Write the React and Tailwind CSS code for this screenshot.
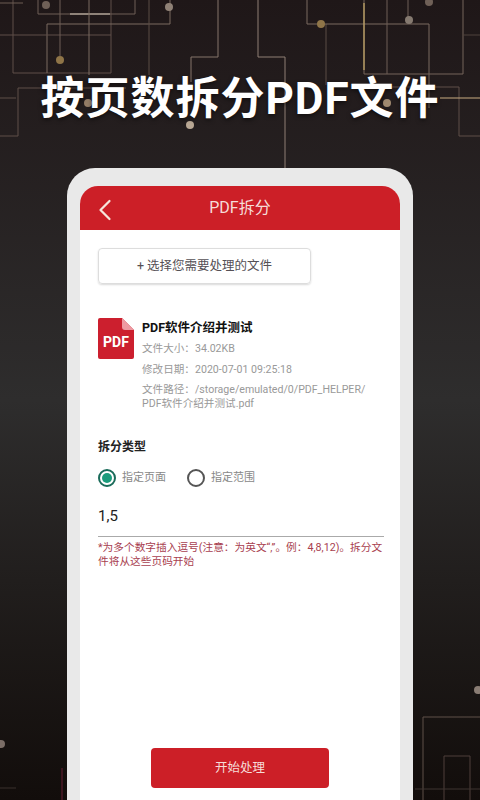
import React from 'react';
import { ChevronLeft } from 'lucide-react';

const FONT = 'font-["Roboto","Noto_Sans_CJK_SC",sans-serif]';

// circuit lines behind the phone: [path, colour, width]
const LINES = [
    ['M13 0V73H111V0', '#5f4f48', 1],
    ['M0 3H23', '#6d5c52', 1],
    ['M38 0V14H135V0', '#6f5f56', 1],
    ['M70 14H110', '#d8ccbb', 1.2],
    ['M47 73V24H170V0', '#7a6a60', 1],
    ['M0 35H111', '#5f4f48', 1],
    ['M89 0V75', '#7a6a60', 1],
    ['M60 0V56', '#6f5f56', 1],
    ['M149 0V75', '#5a4c45', 1],
    ['M218 0V57H191V82', '#85756a', 1],
    ['M258 0V57H285V168', '#8f7f74', 1],
    ['M326 24V85', '#5a4c45', 1],
    ['M307 0V24H429V108', '#7a6a60', 1],
    ['M364 0V74H463V0', '#75655b', 1],
    ['M387 0V74', '#6f5f56', 1],
    ['M364 3V70', '#c9ac68', 1.2],
    ['M408 0V20', '#6f5f56', 1],
    ['M463 35H480', '#4f423c', 1],
    ['M0 136H18V88H126', '#5f4f48', 1],
    ['M480 136H459V87H354', '#5f4f48', 1],
    ['M0 98H16', '#5f4f48', 1],
    ['M440 98H480', '#c9ab82', 1.2],
    // lower right
    ['M423 800V717H480', '#5f5049', 1],
    ['M444 800V756H470V800', '#4f3f3a', 1],
    ['M415 789H480', '#3f3531', 1],
    // lower left
    ['M0 788H16', '#3a302c', 1],
    ['M62 768V800', '#3d1620', 2],
];

const DOTS = [
    [46, 5, '#6f6057'], [169, 7, '#8f8176'], [60, 60, '#8f7548'], [88, 103, '#947d66'],
    [190, 125, '#b8a794'], [321, 24, '#8f7548'], [409, 20, '#857a70'], [387, 103, '#a08a70'],
    [429, 2, '#6f6057'], [478, 690, '#8a7d74'], [1, 744, '#7a6d66'],
];

const Background = () => (
    <svg className="absolute inset-0" width="480" height="800" viewBox="0 0 480 800" fill="none">
        {LINES.map(([d, color, width], i) => (
            <path key={i} d={d} stroke={color} strokeWidth={width} />
        ))}
        {DOTS.map(([cx, cy, color], i) => (
            <circle key={i} cx={cx} cy={cy} r="4" fill={color} />
        ))}
    </svg>
);

const PdfIcon = () => (
    <div className="relative w-9 h-[41px] shrink-0">
        <svg width="36" height="41" viewBox="0 0 36 41" className="absolute inset-0">
            <path d="M2 0H24L36 12V39a2 2 0 0 1-2 2H2a2 2 0 0 1-2-2V2a2 2 0 0 1 2-2Z" fill="#cc1f2e" />
            <path d="M24 0L36 12H27a3 3 0 0 1-3-3Z" fill="#ee9aa2" />
        </svg>
        <span className="absolute left-0 right-0 top-[15px] text-center text-[14px] leading-[18px] font-bold text-white">PDF</span>
    </div>
);

const Radio = ({ checked, label }) => (
    <div className="flex items-center gap-[6px]">
        <span className={`w-[18px] h-[18px] rounded-full border-2 flex items-center justify-center ${checked ? 'border-[#1a6b5a]' : 'border-[#555555]'}`}>
            {checked && <span className="w-[10px] h-[10px] rounded-full bg-[#1b9c7c]" />}
        </span>
        <span className="text-[11px] leading-4 text-[#888888]">{label}</span>
    </div>
);

export default function App() {
    return (
        <div className={`relative w-[480px] h-[800px] overflow-hidden bg-gradient-to-b from-[#1f1718] via-[#2e2d2d] via-50% to-[#120d0b] ${FONT}`}>
            <Background />

            <div className="relative flex flex-col items-center h-full">
                <h1 className="mt-[66px] h-[66px] text-[44px] leading-[66px] font-bold text-white tracking-[1px] whitespace-nowrap [text-shadow:0_2px_4px_rgba(0,0,0,0.5)]">
                    按页数拆分PDF文件
                </h1>

                {/* phone frame */}
                <div className="mt-[36px] w-[346px] flex-1 bg-[#e9e9e9] rounded-t-[28px] pt-[18px] px-[13px]">
                    <div className="flex flex-col h-full bg-white rounded-t-[18px] overflow-hidden">
                        <div className="relative flex items-center justify-center h-[44px] shrink-0 bg-[#cc1f27]">
                            <ChevronLeft className="absolute left-[7px] top-[6px] text-[#f7e5dc]" size={36} strokeWidth={1.5} />
                            <span className="text-[16px] text-[#f6dcd8]">PDF拆分</span>
                        </div>

                        <div className="flex flex-col flex-1 px-[18px] pt-[18px] pb-[12px]">
                            <button className="w-[213px] h-[36px] rounded-[4px] border border-[#dddddd] shadow-[0_1px_2px_rgba(0,0,0,0.15)] text-[12.5px] text-[#555055]">
                                + 选择您需要处理的文件
                            </button>

                            <div className="flex gap-[8px] mt-[34px]">
                                <PdfIcon />
                                <div className="flex flex-col">
                                    <span className="text-[12.5px] leading-[18px] font-bold text-[#111111] mt-[1px]">PDF软件介绍并测试</span>
                                    <span className="text-[10.6px] leading-[14px] text-[#999999] mt-[5px]">文件大小：34.02KB</span>
                                    <span className="text-[10.6px] leading-[14px] text-[#999999] mt-[7px]">修改日期：2020-07-01 09:25:18</span>
                                    <span className="w-[232px] text-[10.6px] leading-[14px] text-[#999999] mt-[6px]">文件路径：/storage/emulated/0/PDF_HELPER/<br />PDF软件介绍并测试.pdf</span>
                                </div>
                            </div>

                            <div className="mt-[27px] text-[12px] leading-[18px] font-bold text-[#222222]">拆分类型</div>
                            <div className="flex gap-[21px] mt-[13px]">
                                <Radio checked label="指定页面" />
                                <Radio label="指定范围" />
                            </div>

                            <div className="mt-[16px] w-[286px] h-[34px] border-b border-[#aaaaaa] text-[15px] leading-[26px] text-[#222222]">1,5</div>
                            <p className="mt-[4px] w-[286px] text-[10.7px] leading-[14px] text-[#a8404f]">
                                *为多个数字插入逗号(注意：为英文“,”。例：4,8,12)。拆分文<br />件将从这些页码开始
                            </p>

                            <button className="mt-auto self-center w-[178px] h-[40px] rounded-[4px] bg-[#cc1f27] text-[12.5px] text-[#f6dcd8]">
                                开始处理
                            </button>
                        </div>
                    </div>
                </div>
            </div>
        </div>
    );
}
